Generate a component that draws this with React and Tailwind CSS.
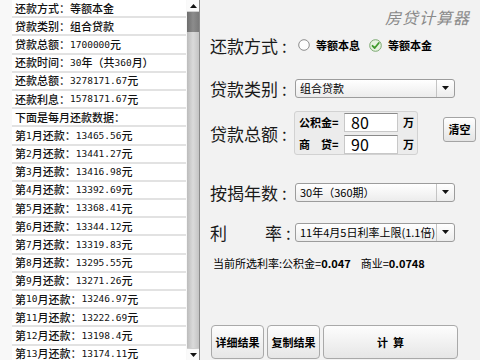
import React from "react";

const rows = [
  "还款方式：等额本金",
  "贷款类别：组合贷款",
  "贷款总额：1700000元",
  "还款时间：30年（共360月）",
  "还款总额：3278171.67元",
  "还款利息：1578171.67元",
  "下面是每月还款数据：",
  ...[
    "13465.56", "13441.27", "13416.98", "13392.69", "13368.41", "13344.12", "13319.83",
    "13295.55", "13271.26", "13246.97", "13222.69", "13198.4", "13174.11",
  ].map((v, i) => `第${i + 1}月还款：${v}元`),
];

function Row({ text }) {
  const parts = text.split(/([0-9.]+)/);
  return (
    <>
      {parts.map((p, i) =>
        /^[0-9.]+$/.test(p) ? (
          <span key={i} className="font-['DejaVu_Sans_Mono',monospace] text-[9.5px]">
            {p}
          </span>
        ) : (
          <span key={i}>{p}</span>
        )
      )}
    </>
  );
}

function Arrow({ up }) {
  return (
    <svg width="7" height="4" viewBox="0 0 7 4">
      {up ? <path d="M0 4 L3.5 0 L7 4 Z" fill="#111" /> : <path d="M0 0 L7 0 L3.5 4 Z" fill="#111" />}
    </svg>
  );
}

function Select({ text }) {
  return (
    <div className="w-[160px] h-[19px] flex border border-[#9c9c9c] rounded-[3px] bg-gradient-to-b from-white to-[#ececec] overflow-hidden">
      <div className="flex-1 flex items-center pl-[4px] text-[11px] text-black leading-none">{text}</div>
      <div className="w-[18px] flex items-center justify-center border-l border-[#c4c4c4]">
        <Arrow />
      </div>
    </div>
  );
}

function Label({ children }) {
  return (
    <div className="w-[85px] flex items-center text-[17px] text-[#1a1a1a] leading-none">
      <span>{children}</span>
      <span className="ml-[4px]">:</span>
    </div>
  );
}

function Btn({ w, children }) {
  return (
    <div
      className={`${w} h-[34px] flex items-center justify-center border border-[#a9a9a9] rounded-[4px] bg-gradient-to-b from-[#fdfdfd] to-[#e6e6e6] text-[11px] text-black`}
    >
      {children}
    </div>
  );
}

export default function App() {
  return (
    <div className="w-[480px] h-[360px] flex overflow-hidden font-['Noto_Sans_CJK_SC',sans-serif] bg-[#f2f2f2]">
      {/* left list */}
      <div className="w-[200px] h-full flex border-r border-[#8a8a8a] bg-[#f8f8f8]">
        <div className="w-[187px] h-full overflow-hidden pl-[12px] pr-[1px]">
          {rows.map((r) => (
            <div
              key={r}
              className="h-[18.2px] box-border border-b-2 border-[#e2e2e2] bg-white flex items-center pl-[3px] text-[11px] font-medium text-[#111] leading-none whitespace-nowrap"
            >
              <Row text={r} />
            </div>
          ))}
        </div>
        <div className="w-[12px] h-full flex flex-col bg-gradient-to-r from-[#bcbcbc] via-[#dadada] to-[#c4c4c4]">
          <div className="h-[12px] bg-[#fafafa] flex items-center justify-center border-b border-[#cfcfcf]">
            <Arrow up />
          </div>
          <div className="h-[20px] bg-gradient-to-r from-[#6e6e6e] via-[#8c8c8c] to-[#7a7a7a]" />
          <div className="flex-1" />
          <div className="h-[12px] bg-[#fafafa] flex items-center justify-center border-t border-[#cfcfcf]">
            <Arrow />
          </div>
        </div>
      </div>

      {/* right panel */}
      <div className="flex-1 flex flex-col pl-[10px]">
        <div className="h-[34px] flex items-center justify-end pr-[10px] text-[16px] italic text-[#8a8a8a] tracking-[1px]">
          房贷计算器
        </div>

        <div className="h-[22px] flex items-center">
          <Label>还款方式</Label>
          <div className="ml-[3px] flex items-center text-[11px] font-bold text-black">
            <svg width="12" height="12" viewBox="0 0 12 12">
              <circle cx="6" cy="6" r="5.3" fill="#fdfdfd" stroke="#8c8c8c" strokeWidth="1" />
            </svg>
            <span className="ml-[6px]">等额本息</span>
            <svg width="13" height="13" viewBox="0 0 13 13" className="ml-[9px]">
              <circle cx="6.5" cy="6.5" r="5.8" fill="#e6f3df" stroke="#7aa870" strokeWidth="1" />
              <path d="M3.5 6.8 L5.7 9 L9.8 4" fill="none" stroke="#3f9a2c" strokeWidth="1.8" strokeLinecap="round" strokeLinejoin="round" />
            </svg>
            <span className="ml-[6px]">等额本金</span>
          </div>
        </div>

        <div className="h-[22px] mt-[21px] flex items-center">
          <Label>贷款类别</Label>
          <Select text="组合贷款" />
        </div>

        <div className="h-[44px] mt-[12px] flex items-center">
          <Label>贷款总额</Label>
          <div className="w-[124px] h-[44px] -ml-[1px] border border-[#d2d2d2] rounded-[3px] bg-[#ececec] flex flex-col justify-center gap-[3px] pl-[4px] text-[11px] font-bold text-black">
            <div className="flex items-center">
              <span className="w-[45px]">公积金=</span>
              <div className="w-[54px] h-[19px] bg-white border border-[#c8c8c8] border-t-[#8a8a8a] flex items-center pl-[6px] text-[16px] font-normal leading-none">80</div>
              <span className="ml-[5px]">万</span>
            </div>
            <div className="flex items-center">
              <span className="w-[45px] flex"><span>商</span><span className="ml-[11px]">贷=</span></span>
              <div className="w-[54px] h-[19px] bg-white border border-[#c8c8c8] border-t-[#8a8a8a] flex items-center pl-[6px] text-[16px] font-normal leading-none">90</div>
              <span className="ml-[5px]">万</span>
            </div>
          </div>
          <div className="ml-[25px] self-start mt-[6px] w-[33px] h-[25px] border border-[#a4a4a4] rounded-[3px] bg-gradient-to-b from-white to-[#e4e4e4] flex items-center justify-center text-[11px] font-bold text-black">
            清空
          </div>
        </div>

        <div className="h-[22px] mt-[26px] flex items-center">
          <Label>按揭年数</Label>
          <Select text="30年（360期）" />
        </div>

        <div className="h-[22px] mt-[18px] flex items-center">
          <div className="w-[85px] flex items-center text-[17px] text-[#1a1a1a] leading-none">
            <span>利</span>
            <span className="ml-[38px]">率</span>
            <span className="ml-[4px]">:</span>
          </div>
          <Select text="11年4月5日利率上限(1.1倍)" />
        </div>

        <div className="h-[14px] mt-[13px] ml-[3px] flex items-center text-[11px] text-black leading-none whitespace-nowrap">
          当前所选利率:公积金=<span className="font-bold">0.047</span>
          <span className="ml-[10px]">商业=</span>
          <span className="font-bold">0.0748</span>
        </div>

        <div className="mt-[55px] ml-[1px] flex gap-[3px] font-bold">
          <Btn w="w-[53px]">详细结果</Btn>
          <Btn w="w-[53px]">复制结果</Btn>
          <Btn w="w-[135px]">计&nbsp;&nbsp;算</Btn>
        </div>
      </div>
    </div>
  );
}
